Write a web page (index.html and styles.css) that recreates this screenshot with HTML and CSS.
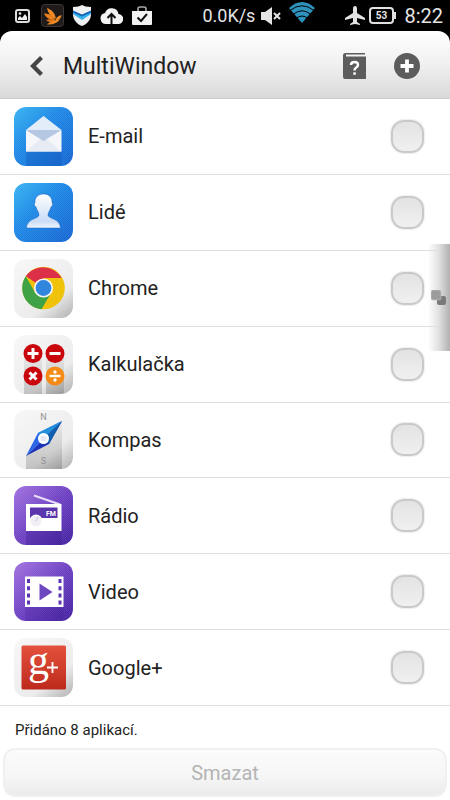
FILE: index.html
```html
<!DOCTYPE html>
<html lang="cs">
<head>
    <meta charset="UTF-8">
    <meta name="viewport" content="width=device-width, initial-scale=1.0">
    <title>MultiWindow</title>
    <link rel="stylesheet" href="styles.css">
</head>
<body>
    <!-- Shared gradients for the icons -->
    <svg class="defs" width="0" height="0" aria-hidden="true">
        <defs>
            <linearGradient id="blue" x1="0" y1="0" x2="1" y2="1">
                <stop offset="0" stop-color="#38b4f2"/>
                <stop offset="0.4" stop-color="#1f8ae6"/>
                <stop offset="1" stop-color="#1665d2"/>
            </linearGradient>
            <linearGradient id="purple" x1="0" y1="0" x2="1" y2="1">
                <stop offset="0" stop-color="#a273df"/>
                <stop offset="0.5" stop-color="#6f42c4"/>
                <stop offset="1" stop-color="#4321a0"/>
            </linearGradient>
            <linearGradient id="silver" x1="0.2" y1="0" x2="1" y2="1">
                <stop offset="0" stop-color="#f6f6f6"/>
                <stop offset="0.65" stop-color="#ececec"/>
                <stop offset="1" stop-color="#b0b0b0"/>
            </linearGradient>
            <linearGradient id="shade" x1="0" y1="0" x2="0" y2="1">
                <stop offset="0" stop-color="#000" stop-opacity="0.03"/>
                <stop offset="1" stop-color="#000" stop-opacity="0.18"/>
            </linearGradient>
            <linearGradient id="paper" x1="0" y1="0" x2="0" y2="1">
                <stop offset="0" stop-color="#fff"/>
                <stop offset="0.8" stop-color="#c9dcf5"/>
                <stop offset="1" stop-color="#eef5fd"/>
            </linearGradient>
            <linearGradient id="red" x1="0" y1="0" x2="0" y2="1">
                <stop offset="0" stop-color="#e4523d"/>
                <stop offset="1" stop-color="#bd2a1c"/>
            </linearGradient>
            <pattern id="weave" width="2" height="2" patternUnits="userSpaceOnUse">
                <path d="M0 0h1v1H0zM1 1h1v1H1z" fill="#fff" fill-opacity="0.06"/>
            </pattern>
        </defs>
    </svg>

    <div class="status-bar">
        <div class="notifications">
            <svg width="15" height="14" viewBox="0 0 15 14">
                <rect x="1" y="1" width="13" height="12" rx="2" fill="none" stroke="#ddd" stroke-width="2"/>
                <path d="M3 11V9l2-2 2 2 3-4 2 3v3z" fill="#eee"/>
                <circle cx="5" cy="4.500" r="1.300" fill="#eee"/>
            </svg>
            <svg width="23" height="23" viewBox="0 0 23 23">
                <rect x="0.500" y="0.500" width="22" height="22" rx="3" fill="#1e1b1a" stroke="#3c3734"/>
                <path d="M6 4c5 2 8 5 9 11C10 13 7 9 6 4z" fill="#f08a24"/>
                <path d="M3 9.500c5 0 9 2 11 6.500-5 0-9-2-11-6.500z" fill="#e97f1e"/>
                <path d="M5 16c3-1 7-1 10 1-3 2-7 1.500-10-1z" fill="#e0741a"/>
                <path d="M6 20.500c3-3 7-4 13-5-3 4-8 5.500-13 5z" fill="#f08a24"/>
                <path d="M20.500 11c0 3-2 5-6 6 0-3 2-5 6-6z" fill="#f08a24"/>
            </svg>
            <svg width="18" height="21" viewBox="0 0 18 21">
                <path d="M0 2c4 0 7-1 9-2 2 1 5 2 9 2v7c0 6-4 10-9 12-5-2-9-6-9-12z" fill="#eef0f2"/>
                <path d="M0 6l9 4 9-4v3l-9 6-9-6z" fill="#35b0ea"/>
                <path d="M0 5.500l9 4 9-4v2l-9 4-9-4z" fill="#1463b5"/>
            </svg>
            <svg width="23" height="17" viewBox="0 0 23 17">
                <path d="M6 17a5.500 5.500 0 0 1-1-10.900A7 7 0 0 1 18.500 7 5 5 0 0 1 18 17z" fill="#f4f4f4"/>
                <path d="M11.500 17V8M7.500 11l4-4 4 4" fill="none" stroke="#111" stroke-width="2"/>
            </svg>
            <svg width="20" height="19" viewBox="0 0 20 19">
                <path d="M6 6V3q0-2 2-2h4q2 0 2 2v3" fill="none" stroke="#aaa" stroke-width="1.600"/>
                <path d="M0 5h20v13q0 1-1 1H1q-1 0-1-1z" fill="#f2f2f2"/>
                <path d="M5.500 11.500l3.500 3.500 6-7" fill="none" stroke="#111" stroke-width="2"/>
            </svg>
        </div>
        <div class="system">
            <span class="speed">0.0K/s</span>
            <svg width="20" height="18" viewBox="0 0 20 18">
                <path d="M0 5h4l7-5v18l-7-5H0z" fill="#e4e4e4"/>
                <path d="M13 6l6 6M19 6l-6 6" stroke="#e4e4e4" stroke-width="2"/>
            </svg>
            <svg class="wifi" width="26" height="21" viewBox="0 0 26 21">
                <path d="M0 6Q13-6 26 6L13 21z" fill="#2d93bd"/>
                <path d="M1 8.500Q13-1 25 8.500M4 12.500Q13 5 22 12.500M7 16.500Q13 11.500 19 16.500" fill="none" stroke="#000" stroke-width="1"/>
            </svg>
            <svg width="20" height="19" viewBox="0 0 20 19">
                <path d="M10 0q2 0 2 3v4l8 5v2l-8-2v4l3 2v1l-5-1-5 1v-1l3-2v-4l-8 2v-2l8-5V3q0-3 2-3z" fill="#e4e4e4"/>
            </svg>
            <svg width="27" height="17" viewBox="0 0 27 17">
                <rect x="1" y="1" width="23" height="15" rx="3" fill="none" stroke="#e0e0e0" stroke-width="2"/>
                <path d="M25 5h2v7h-2z" fill="#e0e0e0"/>
                <text class="battery-level" x="12.500" y="12" text-anchor="middle">53</text>
            </svg>
            <span class="clock">8:22</span>
        </div>
    </div>

    <header class="header">
        <button class="icon-button back" type="button" aria-label="Zpět">
            <svg width="14" height="22" viewBox="0 0 14 22">
                <path d="M11.500 2.500L3 11l8.500 8.500" fill="none" stroke="#444" stroke-width="4.200"/>
            </svg>
        </button>
        <h1>MultiWindow</h1>
        <button class="icon-button" type="button" aria-label="Nápověda">
            <svg width="23" height="26" viewBox="0 0 23 26">
                <path d="M2.500 0H22v1.500H3v2h20V26H2q-2 0-2-2V2.500Q0 0 2.500 0z" fill="#5c5c5c"/>
                <path d="M8 12q0-3 3.500-3t3.500 3q0 1.500-1.800 2.600-1.700 1-1.700 2.900" fill="none" stroke="#fff" stroke-width="2.400"/>
                <path d="M10.300 19.300h2.500v2.500h-2.500z" fill="#fff"/>
            </svg>
        </button>
        <button class="icon-button add" type="button" aria-label="Přidat">
            <svg width="26" height="26" viewBox="0 0 26 26">
                <circle cx="13" cy="13" r="13" fill="#5c5c5c"/>
                <path d="M13 6.500v13M6.500 13h13" stroke="#fff" stroke-width="3.800"/>
            </svg>
        </button>
    </header>

    <ul class="app-list">
        <li>
            <label class="app">
                <svg class="app-icon" viewBox="0 0 59 59">
                    <rect width="59" height="59" rx="12" fill="url(#blue)"/>
                    <rect width="59" height="59" rx="12" fill="url(#weave)"/>
                    <path d="M12 44h35.500v15H12z" fill="#0d4fae" fill-opacity="0.3"/>
                    <path d="M12 23L29.500 9l18 14z" fill="#e3edf9"/>
                    <path d="M12 23h35.500v21.500H12z" fill="#f4f6f9"/>
                    <path d="M12 44.500l17.500-15 18 15z" fill="#e6ebf4"/>
                    <path d="M12 23h35.500l-18 11z" fill="#b5c7e3"/>
                </svg>
                <span class="app-name">E-mail</span>
                <input type="checkbox">
            </label>
        </li>
        <li>
            <label class="app">
                <svg class="app-icon" viewBox="0 0 59 59">
                    <rect width="59" height="59" rx="12" fill="url(#blue)"/>
                    <rect width="59" height="59" rx="12" fill="url(#weave)"/>
                    <path d="M29.500 11c6 0 9 4 8.500 9 1 0 1 3-1 4-.5 3-3 5-3 8 0 4 12 3 12.500 13h-34C13 35 25 36 25 32c0-3-2.500-5-3-8-2-1-2-4-1-4-.5-5 2.500-9 8.500-9z" fill="url(#paper)" stroke="#1664c4" stroke-opacity="0.5"/>
                </svg>
                <span class="app-name">Lidé</span>
                <input type="checkbox">
            </label>
        </li>
        <li>
            <label class="app">
                <svg class="app-icon" viewBox="0 0 59 59">
                    <rect width="59" height="59" rx="12" fill="url(#silver)"/>
                    <circle cx="29.500" cy="29" r="21.300" fill="#f0c20c"/>
                    <path d="M29.500 29L11.800 17.200A21.300 21.300 0 0 1 47.500 19H29.500z" fill="#dc2f48"/>
                    <path d="M11.800 17.200A21.300 21.300 0 0 0 27.500 50.200L37 34l-15.500.5z" fill="#3fa345"/>
                    <circle cx="29.500" cy="29" r="9.600" fill="#f5f5f5"/>
                    <circle cx="29.500" cy="29" r="7.900" fill="#2f86dc"/>
                </svg>
                <span class="app-name">Chrome</span>
                <input type="checkbox">
            </label>
        </li>
        <li>
            <label class="app">
                <svg class="app-icon" viewBox="0 0 59 59">
                    <rect width="59" height="59" rx="12" fill="url(#silver)"/>
                    <path d="M10 18h18v41H10zM32 18h18v40l-3 1H32z" fill="url(#shade)"/>
                    <circle cx="19" cy="18.500" r="9.500" fill="#c8060c"/>
                    <circle cx="41" cy="18.500" r="9.500" fill="#c8060c"/>
                    <circle cx="19" cy="41" r="9.500" fill="#c8060c"/>
                    <circle cx="41" cy="41" r="9.500" fill="#f58a16"/>
                    <path d="M19 13v11M13.500 18.500h11M35.500 18.500h11M15.500 37.500l7 7M22.500 37.500l-7 7" stroke="#fff" stroke-width="3"/>
                    <path d="M35.500 41h11" stroke="#fff" stroke-width="2.400"/>
                    <circle cx="41" cy="37" r="1.700" fill="#fff"/>
                    <circle cx="41" cy="45" r="1.700" fill="#fff"/>
                </svg>
                <span class="app-name">Kalkulačka</span>
                <input type="checkbox">
            </label>
        </li>
        <li>
            <label class="app">
                <svg class="app-icon" viewBox="0 0 59 59">
                    <rect width="59" height="59" rx="12" fill="url(#silver)"/>
                    <path d="M12 46L48 11v48H12z" fill="url(#shade)"/>
                    <text class="compass-mark" x="29.500" y="10" text-anchor="middle">N</text>
                    <text class="compass-mark" x="29.500" y="54" text-anchor="middle">S</text>
                    <path d="M48 11L24 23l-12 23z" fill="#2a66ea"/>
                    <path d="M48 11L35 34 12 46z" fill="#1c34b8"/>
                    <path d="M48 11L24 23l5.500 5.500z" fill="#2390dc"/>
                    <path d="M48 11L29.500 28.500 35 34z" fill="#135eac"/>
                    <circle cx="29.500" cy="28.500" r="5.500" fill="#fff"/>
                    <circle cx="29.500" cy="28.500" r="3" fill="#e3e9f5"/>
                </svg>
                <span class="app-name">Kompas</span>
                <input type="checkbox">
            </label>
        </li>
        <li>
            <label class="app">
                <svg class="app-icon" viewBox="0 0 59 59">
                    <rect width="59" height="59" rx="12" fill="url(#purple)"/>
                    <rect width="59" height="59" rx="12" fill="url(#weave)"/>
                    <path d="M12 45h35.500v14H12z" fill="#2c1080" fill-opacity="0.25"/>
                    <path d="M20 9.500L46 18.500" stroke="#e9dff8" stroke-width="2"/>
                    <path d="M12 18h35.500v27H12z" fill="#fff"/>
                    <path d="M16 21.500h27.500V32H16z" fill="#5a35ae"/>
                    <text class="fm" x="37" y="29.500" text-anchor="middle">FM</text>
                    <circle cx="22" cy="35" r="6.500" fill="#fff"/>
                    <circle cx="22" cy="35" r="5.500" fill="#f1eff5"/>
                    <path d="M22 35l2-4" stroke="#c6bcda"/>
                </svg>
                <span class="app-name">Rádio</span>
                <input type="checkbox">
            </label>
        </li>
        <li>
            <label class="app">
                <svg class="app-icon" viewBox="0 0 59 59">
                    <rect width="59" height="59" rx="12" fill="url(#purple)"/>
                    <rect width="59" height="59" rx="12" fill="url(#weave)"/>
                    <path d="M11 45h38.500v14H11z" fill="#2c1080" fill-opacity="0.15"/>
                    <path d="M11 14.500h38.500V45H11z" fill="#fff"/>
                    <path d="M14.500 17v28M46 17v28" stroke="#5b35b4" stroke-width="3" stroke-dasharray="4 3.200"/>
                    <path d="M25.500 21.500L38.500 30l-13 8.500z" fill="#6e47c0"/>
                </svg>
                <span class="app-name">Video</span>
                <input type="checkbox">
            </label>
        </li>
        <li>
            <label class="app">
                <svg class="app-icon" viewBox="0 0 59 59">
                    <rect width="59" height="59" rx="12" fill="url(#silver)"/>
                    <rect x="7.500" y="7.500" width="44.500" height="44" rx="1.500" fill="url(#red)"/>
                    <text class="gplus" x="14" y="36">g</text>
                    <path d="M38.500 24v11M33 29.500h11" stroke="#fff" stroke-width="1.800"/>
                </svg>
                <span class="app-name">Google+</span>
                <input type="checkbox">
            </label>
        </li>
    </ul>

    <footer class="footer">
        <p>Přidáno 8 aplikací.</p>
        <button class="delete" type="button" disabled>Smazat</button>
    </footer>

    <!-- Side handle floats over the list -->
    <div class="handle">
        <svg width="16" height="16" viewBox="0 0 16 16">
            <rect x="6" y="6" width="9" height="9" rx="2" fill="#7a7a7a"/>
            <rect x="0" y="0" width="10" height="10" rx="2" fill="#9c9c9c" stroke="#c4c4c4" stroke-width="0.600"/>
        </svg>
    </div>
</body>
</html>
```
FILE: styles.css
```css
* {
    box-sizing: border-box;
}

body {
    margin: 0;
    min-height: 100vh;
    display: flex;
    flex-direction: column;
    position: relative;
    background-color: #000;
    color: #222;
    font-family: Roboto, "Noto Sans", sans-serif;
}

svg {
    display: block;
    flex-shrink: 0;
}

.defs {
    position: absolute;
}

.status-bar {
    height: 31px;
    padding: 0 7px 0 15px;
    display: flex;
    align-items: center;
    justify-content: space-between;
    color: #e4e4e4;
}

.notifications {
    display: flex;
    align-items: center;
    gap: 9px;
}

.notifications svg:first-child {
    margin-right: 2px;
}

.system {
    display: flex;
    align-items: center;
    gap: 4px;
}

.speed {
    font-size: 18px;
    margin-right: 2px;
}

.wifi {
    margin: 0 26px 6px 4px;
}

.clock {
    font-size: 20px;
    margin-left: 4px;
}

.battery-level {
    font-size: 10px;
    font-weight: 700;
    fill: #e4e4e4;
}

.header {
    height: 68px;
    padding: 2px 26px 0;
    display: flex;
    align-items: center;
    background: linear-gradient(#fff, #f0f0f0 50%, #d9d9d9);
    border-bottom: 1px solid #cacaca;
    border-radius: 12px 12px 0 0;
}

.header h1 {
    flex: 1;
    margin: 0;
    padding-top: 2px;
    font-size: 23px;
    font-weight: 400;
}

.icon-button {
    padding: 4px;
    border: 0;
    background: none;
}

.back {
    margin-right: 15px;
}

.add {
    margin-left: 20px;
}

.app-list {
    flex: 1;
    margin: 0;
    padding: 0;
    display: grid;
    grid-auto-rows: 1fr;
    list-style: none;
    background-color: #fff;
}

.app-list li {
    border-bottom: 1px solid #dfdfdf;
}

.app {
    height: 100%;
    padding: 0 26px 0 14px;
    display: flex;
    align-items: center;
}

.app-icon {
    width: 59px;
    height: 59px;
}

.app-name {
    flex: 1;
    margin-left: 15px;
    font-size: 20px;
}

.app input {
    appearance: none;
    width: 33px;
    height: 33px;
    margin: 0;
    border: 2px solid #c9c9c9;
    border-radius: 13px;
    background: linear-gradient(#e3e3e3, #f0f0f0);
    box-shadow: 0 0 1px 1px #eee;
}

.app input:checked {
    background: #2196f3;
}

.compass-mark {
    font-size: 9px;
    fill: #8f9294;
}

.fm {
    font-size: 7px;
    font-weight: 700;
    fill: #fff;
}

.gplus {
    font-family: "Liberation Serif", serif;
    font-size: 42px;
    fill: #fff;
}

.footer {
    padding: 14px 3px 3px;
    background-color: #fff;
}

.footer p {
    margin: 0 12px 8px;
    font-size: 15px;
    line-height: 20px;
}

.delete {
    display: block;
    width: 100%;
    height: 49px;
    border: 2px solid #f0f0f0;
    border-radius: 12px;
    background: linear-gradient(#fbfbfb, #f6f6f6 60%, #ebebeb);
    color: #b4b4b4;
    font-family: inherit;
    font-size: 20px;
}

.handle {
    position: absolute;
    top: 244px;
    right: 0;
    width: 22px;
    height: 107px;
    padding-left: 3px;
    display: flex;
    align-items: center;
    background: linear-gradient(to right, rgba(200, 200, 200, 0), #e0e0e0 50%, #b0b0b0);
}
```
